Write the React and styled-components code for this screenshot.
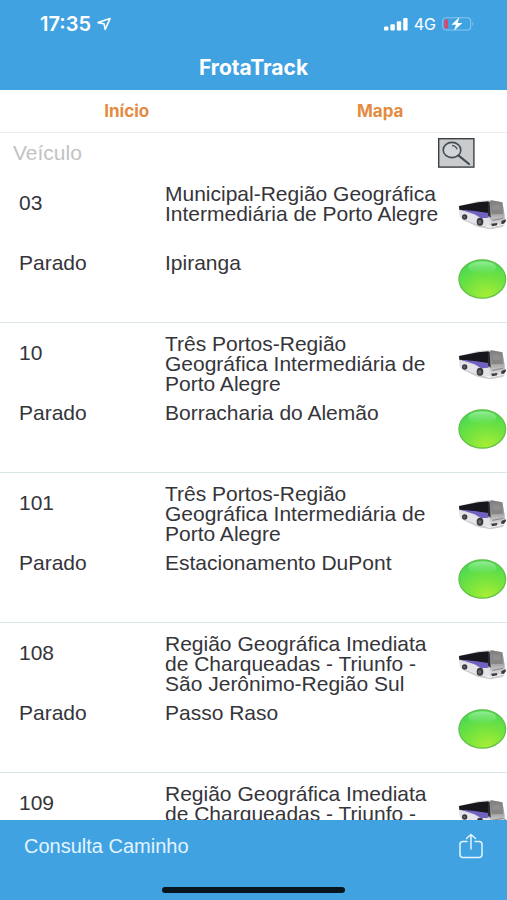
import React, { useState } from 'react';
import styled, { createGlobalStyle } from 'styled-components';

const GlobalStyle = createGlobalStyle`
    * {
        box-sizing: border-box;
    }

    body {
        margin: 0;
        background: #ffffff;
        font-family: 'Liberation Sans', Arial, sans-serif;
        color: #35353a;
    }

    button {
        font-family: inherit;
        padding: 0;
        border: none;
        background: none;
        cursor: pointer;
    }
`;

// Styled components
const Screen = styled.div`
    display: flex;
    flex-direction: column;
    height: 100vh;
    overflow: hidden;
`;

const Header = styled.header`
    flex: none;
    background: #41a2e2;
    color: #ffffff;
    font-family: Inter, sans-serif;
`;

const StatusBar = styled.div`
    display: flex;
    align-items: center;
    justify-content: space-between;
    height: 48px;
    padding: 0 32px 0 40px;
`;

const StatusGroup = styled.div`
    display: flex;
    align-items: center;
    gap: 6px;
`;

const Clock = styled.span`
    font-size: 20px;
    font-weight: 600;
`;

const Network = styled.span`
    font-size: 16px;
`;

const Title = styled.h1`
    margin: 0;
    height: 42px;
    line-height: 40px;
    font-size: 21px;
    font-weight: 700;
    text-align: center;
`;

const Tabs = styled.nav`
    flex: none;
    display: grid;
    grid-template-columns: 1fr 1fr;
    height: 43px;
    border-bottom: 1px solid #ececec;
    font-family: Inter, sans-serif;
`;

const Tab = styled.button`
    font-size: 17px;
    font-weight: 700;
    color: #e38b3f;
`;

const SearchBar = styled.form`
    flex: none;
    display: flex;
    align-items: center;
    height: 40px;
    padding: 0 32px 0 13px;
`;

const SearchInput = styled.input`
    flex: 1;
    min-width: 0;
    padding: 0;
    border: none;
    outline: none;
    font-family: inherit;
    font-size: 21px;
    color: #35353a;

    &::placeholder {
        color: #c2c2c4;
        opacity: 1;
    }
`;

const SearchButton = styled.button`
    width: 37px;
    height: 30px;

    svg {
        display: block;
    }
`;

const VehicleList = styled.main`
    flex: 1;
    min-height: 0;
    overflow: hidden;
`;

const VehicleRow = styled.article`
    display: grid;
    grid-template-columns: 146px 1fr 49px;
    grid-template-rows: 60px 69px;
    row-gap: 9px;
    padding: 11px 0 0 19px;

    & + & {
        border-top: 1px solid #dbe6e6;
    }
`;

const Cell = styled.div`
    font-size: 21px;
    line-height: 20px;
    padding-right: 12px;
`;

const VehicleNumber = styled(Cell)`
    padding-top: 9px;
`;

const BusCell = styled.div`
    padding-top: 15px;
`;

const LightCell = styled.div`
    padding-top: 6px;
`;

const Footer = styled.footer`
    flex: none;
    height: 80px;
    background: #41a2e2;
`;

const Toolbar = styled.div`
    display: flex;
    align-items: center;
    justify-content: space-between;
    height: 52px;
    padding: 0 24px;
`;

const ToolbarButton = styled.button`
    display: flex;
    font-size: 20px;
    color: #e2f5ff;
`;

const HomeBar = styled.div`
    width: 36%;
    height: 6px;
    margin: 15px auto 0;
    border-radius: 3px;
    background: #07151e;
`;

const LocationIcon = () => (
    <svg width="14" height="14" viewBox="0 0 14 14" fill="none" stroke="#fff" strokeWidth="1.6" strokeLinejoin="round">
        <path d="M13 1.6 1 5.6 7 6.8 8.2 12.4Z" />
    </svg>
);

const SignalIcon = () => (
    <svg width="24" height="13" viewBox="0 0 24 13" fill="#fff">
        <rect x="0" y="8.5" width="4.4" height="4" rx="1" />
        <rect x="6.4" y="6.3" width="4.4" height="6.2" rx="1" />
        <rect x="12.8" y="3.2" width="4.4" height="9.3" rx="1" />
        <rect x="19.2" y="0" width="4.4" height="12.5" rx="1" />
    </svg>
);

const BatteryIcon = () => (
    <svg width="33" height="14" viewBox="0 0 33 14">
        <rect x="0.7" y="0.8" width="28" height="12.2" rx="3.5" fill="none" stroke="#86c5ef" strokeWidth="1.1" />
        <path d="M30.3 4.8q2 2.2 0 4.4Z" fill="#86c5ef" />
        <rect x="2.4" y="2.6" width="3.6" height="8.8" rx="1" fill="#d9476b" />
        <path d="M17.4 0.2 9.4 7.8H14L12 13.8 20.4 5.9H15.6Z" fill="#fff" />
    </svg>
);

const SearchIcon = () => (
    <svg width="37" height="30" viewBox="0 0 37 30">
        <rect x="0.7" y="0.7" width="35.2" height="28.4" fill="#c9cbcd" stroke="#3c4044" strokeWidth="1.4" />
        <ellipse cx="14" cy="12" rx="8.8" ry="7.6" fill="#d2d5d8" stroke="#454b54" strokeWidth="1.6" />
        <path d="M14 7.4q4.4 0.4 5 4" fill="none" stroke="#555b64" strokeWidth="1.5" />
        <path d="M20.4 17.4 31 26" stroke="#454b54" strokeWidth="2.2" strokeLinecap="round" />
    </svg>
);

const BusIcon = () => (
    <svg width="49" height="31" viewBox="0 0 147 93" role="img" aria-label="Ônibus">
        <defs>
            <linearGradient id="busFront" x1="0" y1="0" x2="0" y2="1">
                <stop offset="0" stopColor="#7c7c7c" />
                <stop offset="0.55" stopColor="#a8a8a8" />
                <stop offset="1" stopColor="#ececec" />
            </linearGradient>
        </defs>
        <path d="M8 60 45 68 95 86 141 76 134 84 98 91 60 84Z" fill="#cdcdcd" />
        <path d="M2 22 60 6 98 3 134 10 141 58 138 74 100 83 52 74 6 56Z" fill="#dadade" />
        <path d="M3 21 60 10 92 7 91 46 50 38 4 32Z" fill="#17161c" />
        <path d="M8 32 50 36 91 42 92 56 70 58 50 46Z" fill="#6f62c0" />
        <path d="M5 36 48 48 68 60 92 57 97 82 52 74 6 56Z" fill="#e4e4e9" />
        <path d="M95 8 100 4 133 10 139 42 141 64 136 75 102 82 96 58Z" fill="url(#busFront)" />
        <path d="M99 13 130 15 135 44 101 46Z" fill="#858585" />
        <path d="M104 18 126 19 129 32 105 34Z" fill="#8f8f8f" />
        <path d="M90 10 95 8 98 56 90 50Z" fill="#2c2b32" />
        <path d="M99 74 118 72 117 79 103 82ZM130 66 143 61 144 66 138 74 130 75Z" fill="#3b3b40" />
        <path d="M103 62 136 56 136 59 103 66Z" fill="#8b8b8f" />
        <ellipse cx="20" cy="54" rx="8" ry="8" fill="#38383d" />
        <ellipse cx="19" cy="54" rx="3" ry="4" fill="#66666b" />
        <ellipse cx="66" cy="68" rx="10" ry="12" fill="#38383d" />
        <ellipse cx="65" cy="69" rx="5" ry="6" fill="#66666b" />
    </svg>
);

const LightIcon = () => (
    <svg width="49" height="41" viewBox="0 0 49 41" role="img" aria-label="Online">
        <defs>
            <radialGradient id="lightBase" cx="0.6" cy="0.95" r="0.95">
                <stop offset="0" stopColor="#a9ee35" />
                <stop offset="0.5" stopColor="#74e33e" />
                <stop offset="1" stopColor="#44d956" />
            </radialGradient>
            <linearGradient id="lightGloss" x1="0" y1="0" x2="0" y2="1">
                <stop offset="0" stopColor="#a4f0a0" stopOpacity="0.85" />
                <stop offset="1" stopColor="#7be67a" stopOpacity="0.1" />
            </linearGradient>
        </defs>
        <ellipse cx="24.3" cy="20" rx="23.4" ry="19.2" fill="url(#lightBase)" stroke="#62bf48" strokeWidth="1.2" />
        <ellipse cx="24.3" cy="8.5" rx="14" ry="6.2" fill="url(#lightGloss)" />
    </svg>
);

const ShareIcon = () => (
    <svg width="24" height="26" viewBox="0 0 24 26" fill="none" stroke="#e2f5ff" strokeWidth="1.5" strokeLinecap="round" strokeLinejoin="round">
        <path d="M8 8.5H4Q1 8.5 1 11.5V21.5Q1 24.5 4 24.5H20Q23 24.5 23 21.5V11.5Q23 8.5 20 8.5H16" />
        <path d="M12 16V1.5M7.5 5.5 12 1.5 16.5 5.5" />
    </svg>
);

const vehicles = [
    { number: '03', region: 'Municipal-Região Geográfica Intermediária de Porto Alegre', status: 'Parado', place: 'Ipiranga' },
    { number: '10', region: 'Três Portos-Região Geográfica Intermediária de Porto Alegre', status: 'Parado', place: 'Borracharia do Alemão' },
    { number: '101', region: 'Três Portos-Região Geográfica Intermediária de Porto Alegre', status: 'Parado', place: 'Estacionamento DuPont' },
    { number: '108', region: 'Região Geográfica Imediata de Charqueadas - Triunfo - São Jerônimo-Região Sul', status: 'Parado', place: 'Passo Raso' },
    { number: '109', region: 'Região Geográfica Imediata de Charqueadas - Triunfo -' },
];

const App = () => {
    const [search, setSearch] = useState('');

    return (
        <Screen>
            <GlobalStyle />
            <Header>
                <StatusBar>
                    <StatusGroup>
                        <Clock>17:35</Clock>
                        <LocationIcon />
                    </StatusGroup>
                    <StatusGroup>
                        <SignalIcon />
                        <Network>4G</Network>
                        <BatteryIcon />
                    </StatusGroup>
                </StatusBar>
                <Title>FrotaTrack</Title>
            </Header>
            <Tabs>
                <Tab type="button">Início</Tab>
                <Tab type="button">Mapa</Tab>
            </Tabs>
            <SearchBar onSubmit={(e) => e.preventDefault()}>
                <SearchInput
                    aria-label="Veículo"
                    placeholder="Veículo"
                    value={search}
                    onChange={(e) => setSearch(e.target.value)}
                />
                <SearchButton type="submit" aria-label="Buscar">
                    <SearchIcon />
                </SearchButton>
            </SearchBar>
            <VehicleList>
                {vehicles.map((vehicle) => (
                    <VehicleRow key={vehicle.number}>
                        <VehicleNumber>{vehicle.number}</VehicleNumber>
                        <Cell>{vehicle.region}</Cell>
                        <BusCell>
                            <BusIcon />
                        </BusCell>
                        {vehicle.status && (
                            <>
                                <Cell>{vehicle.status}</Cell>
                                <Cell>{vehicle.place}</Cell>
                                <LightCell>
                                    <LightIcon />
                                </LightCell>
                            </>
                        )}
                    </VehicleRow>
                ))}
            </VehicleList>
            <Footer>
                <Toolbar>
                    <ToolbarButton type="button">Consulta Caminho</ToolbarButton>
                    <ToolbarButton type="button" aria-label="Compartilhar">
                        <ShareIcon />
                    </ToolbarButton>
                </Toolbar>
                <HomeBar />
            </Footer>
        </Screen>
    );
};

export default App;
